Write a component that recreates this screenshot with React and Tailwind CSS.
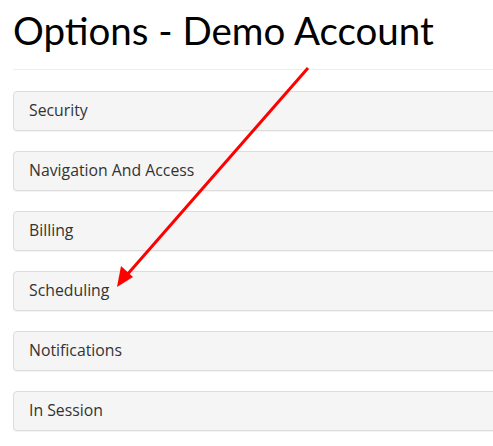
export default function App() {
  const items = ["Security", "Navigation And Access", "Billing", "Scheduling", "Notifications", "In Session"];
  return (
    <div className="relative h-[446px] w-[493px] overflow-hidden bg-white" style={{ fontFamily: "Lato, 'Open Sans', sans-serif" }}>
      <div className="ml-[13px] w-[520px]">
        <h1 className="pt-[8px] text-[38.5px] leading-[44px] text-black font-normal">Options - Demo Account</h1>
        <hr className="mt-[17px] border-t border-[#eeeeee]" />
        <div className="mt-[21px] flex flex-col gap-[20px]">
          {items.map((t) => (
            <div key={t} className="h-[40px] rounded-[4px] border border-[#dddddd] bg-[#f5f5f5] px-[15px] shadow-[0_1px_1px_rgba(0,0,0,0.05)] flex items-center">
              <span className="text-[15.8px] text-[#333333]" style={{ fontFamily: "'Open Sans', sans-serif" }}>{t}</span>
            </div>
          ))}
        </div>
      </div>
      <svg className="absolute left-0 top-0 pointer-events-none" width="493" height="446">
        <line x1="308" y1="68" x2="126" y2="276" stroke="#ff0000" strokeWidth="3" />
        <polygon points="117,287 121,266 133,277" fill="#ff0000" />
      </svg>
    </div>
  );
}
